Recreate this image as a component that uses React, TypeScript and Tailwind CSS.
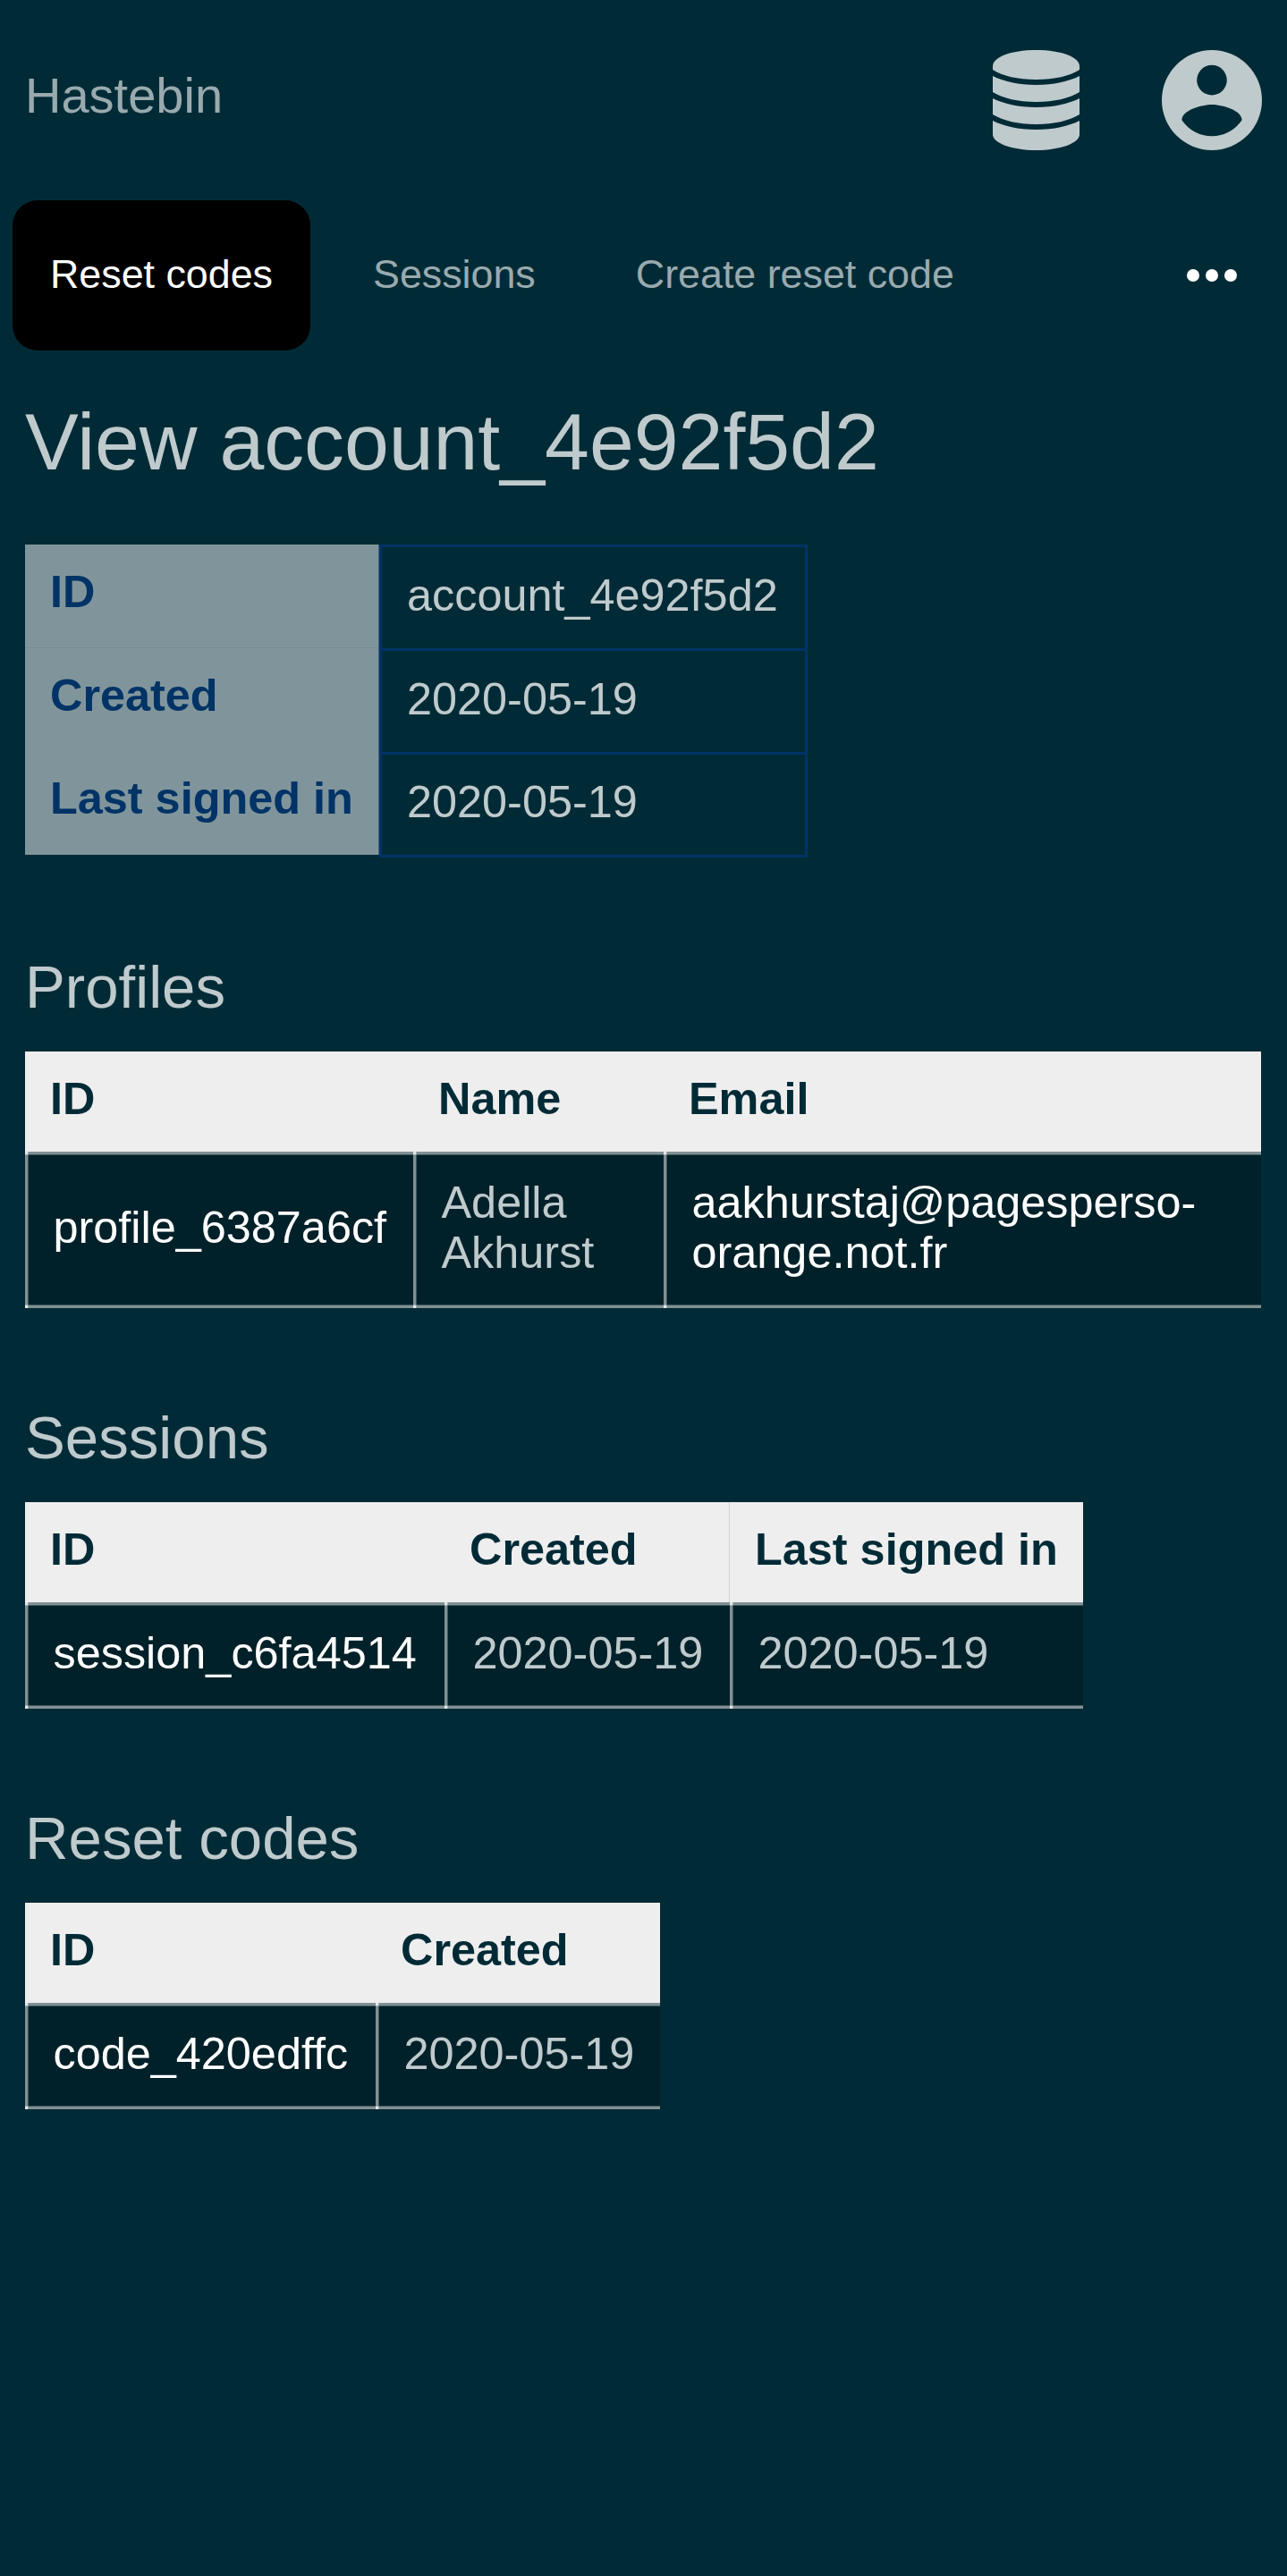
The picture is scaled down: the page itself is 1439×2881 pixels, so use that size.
import React from "react";

// Table rules are translucent and brighten where they cross, at the left corners of each cell.
const ruled =
  "[background:linear-gradient(#ffffff90,#ffffff90)_0_0/3px_3px_no-repeat,linear-gradient(#ffffff90,#ffffff90)_0_100%/3px_3px_no-repeat,linear-gradient(to_right,#ffffff80_3px,#ffffff40_3px,#ffffff40_4px,transparent_4px),linear-gradient(to_bottom,#ffffff80_3px,#ffffff40_3px,#ffffff40_4px,transparent_4px),linear-gradient(to_top,#ffffff80_3px,#ffffff40_3px,#ffffff40_4px,transparent_4px)]";

type Cell = { text: string[]; link?: boolean };

function Table({ widths, heads, cells, bodyHeight }: { widths: string[]; heads: string[]; cells: Cell[]; bodyHeight: string }) {
  return (
    <div className="w-fit text-[50.4px] leading-[56px]">
      <div className="flex h-28 bg-[#eeeeee] font-bold text-[#002b36]">
        {heads.map((h, i) => (
          <div key={i} className={`${widths[i]} shrink-0 pl-7 pt-[25px] whitespace-nowrap ${h === "Created" && heads.length === 3 ? "border-r border-[#cdd3d4]" : ""}`}>
            {h}
          </div>
        ))}
      </div>
      <div className={`flex ${bodyHeight} bg-[#002129]`}>
        {cells.map((c, i) => (
          <div
            key={i}
            className={`${widths[i]} ${ruled} shrink-0 pl-[31.5px] pb-1.5 flex flex-col justify-center whitespace-nowrap ${c.link ? "text-white" : "text-[#bfcacd]"}`}
          >
            {c.text.map((t) => (
              <div key={t}>{t}</div>
            ))}
          </div>
        ))}
      </div>
    </div>
  );
}

function Heading({ children }: { children: React.ReactNode }) {
  return <h2 className="mt-[106px] h-[111px] text-[67.2px] leading-[78px]">{children}</h2>;
}

export default function App() {
  return (
    <div className="h-[2881px] w-[1439px] overflow-hidden bg-[#002b36] text-[#bfcacd] font-['Liberation_Sans',sans-serif]">
      <header className="flex h-56 items-center justify-between px-7">
        <div className="pb-[11px] text-[56px] text-[#99aaaf]">Hastebin</div>
        <div className="flex items-center gap-[92px] fill-[#bfcacd]">
          <svg className="h-28 w-[97px]" viewBox="0 0 97 112">
            <path d="M0 18C0 8 20 0 48.500 0S97 8 97 18V22C86 29 69 33 48.500 33S11 29 0 22Z" />
            <path d="M0 29C12 35 29 39 48.500 39S85 35 97 29V47C85 54 69 58 48.500 58S12 54 0 47Z" />
            <path d="M0 54C12 60 29 64 48.500 64S85 60 97 54V72C85 79 69 83 48.500 83S12 79 0 72Z" />
            <path d="M0 79C12 85 29 89 48.500 89S85 85 97 79V95C96 104 76 112 48.500 112S1 104 0 95Z" />
          </svg>
          <svg className="h-28 w-28" viewBox="0 0 20 20">
            <path fillRule="evenodd" d="M10 0a10 10 0 1 0 0 20a10 10 0 1 0 0-20ZM10 3a3 3 0 1 1 0 6a3 3 0 1 1 0-6ZM10 17.200a7.200 7.200 0 0 1-6-3.220c.03-1.990 4-3.080 6-3.080c1.990 0 5.970 1.090 6 3.080a7.200 7.200 0 0 1-6 3.220Z" />
          </svg>
        </div>
      </header>

      <nav className="flex h-[168px] items-center pl-[14px] pr-[56px] text-[44.8px] text-[#99aaaf]">
        <div className="flex h-[168px] w-[333px] items-center justify-center rounded-[28px] bg-black pb-[3px] text-white">Reset codes</div>
        <div className="ml-[70px] pb-[3px]">Sessions</div>
        <div className="ml-[112px] pb-[3px]">Create reset code</div>
        <svg className="ml-auto h-[14px] w-[56px] fill-white" viewBox="0 0 56 14">
          <circle cx="7" cy="7" r="7" />
          <circle cx="28" cy="7" r="7" />
          <circle cx="49" cy="7" r="7" />
        </svg>
      </nav>

      <main className="px-7">
        <h1 className="mt-[50px] h-[167px] text-[89.6px] leading-[104px]">View account_4e92f5d2</h1>

        <div className="flex h-[350px] text-[50.4px] leading-[56px]">
          <div className="h-[347px] w-[396px] border-r border-[#40647f] bg-[#80959b] font-bold text-[#003366]">
            {["ID", "Created", "Last signed in"].map((t, i) => (
              <div key={t} className={`${i === 0 ? "h-[116px] border-b border-[#758b92]" : "h-[115px]"} pl-7 pt-[25px]`}>{t}</div>
            ))}
          </div>
          <div className="w-[479px] border-x-[3px] border-t-[3px] border-[#003366]">
            {["account_4e92f5d2", "2020-05-19", "2020-05-19"].map((t, i) => (
              <div key={i} className={`${i === 0 ? "h-[116px]" : "h-[115.5px]"} border-b-[3px] border-[#003366] pl-[28px] pt-[25.5px]`}>{t}</div>
            ))}
          </div>
        </div>

        <Heading>Profiles</Heading>
        <Table
          widths={["w-[434px]", "w-[280px]", "w-[668px]"]}
          heads={["ID", "Name", "Email"]}
          cells={[
            { text: ["profile_6387a6cf"], link: true },
            { text: ["Adella", "Akhurst"] },
            { text: ["aakhurstaj@pagesperso-", "orange.not.fr"], link: true },
          ]}
          bodyHeight="h-[175px]"
        />

        <Heading>Sessions</Heading>
        <Table
          widths={["w-[469px]", "w-[319px]", "w-[395px]"]}
          heads={["ID", "Created", "Last signed in"]}
          cells={[{ text: ["session_c6fa4514"], link: true }, { text: ["2020-05-19"] }, { text: ["2020-05-19"] }]}
          bodyHeight="h-[119px]"
        />

        <Heading>Reset codes</Heading>
        <Table
          widths={["w-[392px]", "w-[318px]"]}
          heads={["ID", "Created"]}
          cells={[{ text: ["code_420edffc"], link: true }, { text: ["2020-05-19"] }]}
          bodyHeight="h-[119px]"
        />
      </main>
    </div>
  );
}
